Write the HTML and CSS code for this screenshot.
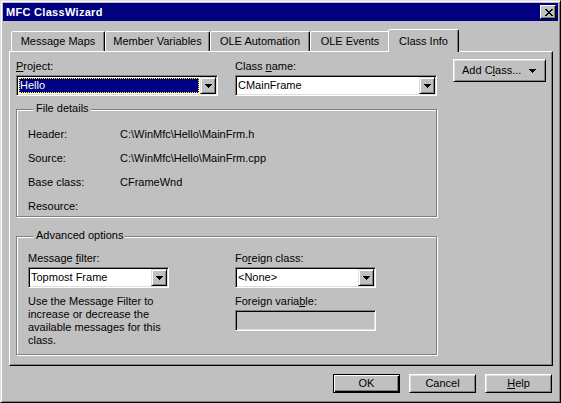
FILE: index.html
```html
<!DOCTYPE html>
<html>
<head>
<meta charset="utf-8">
<title>MFC ClassWizard</title>
<link rel="stylesheet" href="styles.css">
</head>
<body>
<div class="window">
  <div class="titlebar">
    <span class="title">MFC ClassWizard</span>
    <div class="close"><svg width="8" height="7" viewBox="0 0 8 7"><path d="M0 0h2v1h-2zM6 0h2v1h-2zM1 1h2v1h-2zM5 1h2v1h-2zM2 2h4v1h-4zM3 3h2v1h-2zM2 4h4v1h-4zM1 5h2v1h-2zM5 5h2v1h-2zM0 6h2v1h-2zM6 6h2v1h-2z"/></svg></div>
  </div>
  <div class="client">
    <div class="tabs">
      <div class="tab t-mm">Message Maps</div>
      <div class="tab t-mv">Member Variables</div>
      <div class="tab t-oa">OLE Automation</div>
      <div class="tab t-oe">OLE Events</div>
      <div class="tab t-ci selected">Class Info</div>
    </div>
    <div class="panel">
      <div class="main">
        <div class="fields">
          <div class="field">
            <div class="label"><u>P</u>roject:</div>
            <div class="combo">
              <div class="val sel"><span>Hello</span></div>
              <div class="drop"><svg width="7" height="4" viewBox="0 0 7 4"><path d="M0 0h7v1h-1v1h-1v1h-1v1h-1v-1h-1v-1h-1v-1h-1z"/></svg></div>
            </div>
          </div>
          <div class="field">
            <div class="label">Class <u>n</u>ame:</div>
            <div class="combo">
              <div class="val">CMainFrame</div>
              <div class="drop"><svg width="7" height="4" viewBox="0 0 7 4"><path d="M0 0h7v1h-1v1h-1v1h-1v1h-1v-1h-1v-1h-1v-1h-1z"/></svg></div>
            </div>
          </div>
        </div>

        <div class="group file-group">
          <div class="group-title">File details</div>
          <div class="details">
            <span>Header:</span><span>C:\WinMfc\Hello\MainFrm.h</span>
            <span>Source:</span><span>C:\WinMfc\Hello\MainFrm.cpp</span>
            <span>Base class:</span><span>CFrameWnd</span>
            <span>Resource:</span><span></span>
          </div>
        </div>

        <div class="group adv-group">
          <div class="group-title">Advanced options</div>
          <div class="adv">
            <div class="col">
              <div class="label">Message <u>f</u>ilter:</div>
              <div class="combo small">
                <div class="val">Topmost Frame</div>
                <div class="drop"><svg width="7" height="4" viewBox="0 0 7 4"><path d="M0 0h7v1h-1v1h-1v1h-1v1h-1v-1h-1v-1h-1v-1h-1z"/></svg></div>
              </div>
              <p class="desc">Use the Message Filter to<br>increase or decrease the<br>available messages for this<br>class.</p>
            </div>
            <div class="col">
              <div class="label">Fo<u>r</u>eign class:</div>
              <div class="combo small">
                <div class="val">&lt;None&gt;</div>
                <div class="drop"><svg width="7" height="4" viewBox="0 0 7 4"><path d="M0 0h7v1h-1v1h-1v1h-1v1h-1v-1h-1v-1h-1v-1h-1z"/></svg></div>
              </div>
              <div class="label second">Foreign varia<u>b</u>le:</div>
              <div class="edit disabled"></div>
            </div>
          </div>
        </div>
      </div>
      <div class="btn addclass">
        <span>Add C<u>l</u>ass...</span>
        <svg width="7" height="4" viewBox="0 0 7 4"><path d="M0 0h7v1h-1v1h-1v1h-1v1h-1v-1h-1v-1h-1v-1h-1z"/></svg>
      </div>
    </div>
    <div class="buttons">
      <div class="btn default">OK</div>
      <div class="btn">Cancel</div>
      <div class="btn"><u>H</u>elp</div>
    </div>
  </div>
</div>
</body>
</html>
```

FILE: styles.css
```css
* { box-sizing: border-box; }
html, body {
  margin: 0;
  padding: 0;
  background: #c0c0c0;
}
body {
  font-family: "Liberation Sans", Arial, sans-serif;
  font-size: 11px;
  line-height: 13px;
  color: #000;
}
u { text-decoration: underline; text-underline-offset: 1px; }
svg { display: block; }

.window {
  width: 561px;
  height: 403px;
  background: #c0c0c0;
  border: 1px solid;
  border-color: #dfdfdf #000 #000 #dfdfdf;
  box-shadow: inset 1px 1px #fff, inset -1px -1px #808080;
  padding: 2px;
}

.titlebar {
  height: 18px;
  background: #000080;
  display: flex;
  align-items: center;
  justify-content: space-between;
  padding: 0 2px 0 3px;
}
.title {
  color: #fff;
  font-weight: bold;
  letter-spacing: 0.3px;
}
.close {
  width: 16px;
  height: 14px;
  background: #c0c0c0;
  border: 1px solid;
  border-color: #fff #000 #000 #fff;
  box-shadow: inset -1px -1px #808080;
  display: flex;
  align-items: center;
  justify-content: center;
  padding-left: 1px;
}

.client {
  padding: 8px 5px 0 6px;
}

.tabs {
  display: flex;
  align-items: flex-end;
  height: 22px;
  padding-left: 2px;
  position: relative;
  z-index: 1;
}
.tab {
  height: 20px;
  border: 1px solid;
  border-bottom: 0;
  border-color: #fff #000 transparent #fff;
  border-radius: 2px 2px 0 0;
  box-shadow: inset -1px 0 #808080;
  background: #c0c0c0;
  text-align: center;
  padding-top: 3px;
  white-space: nowrap;
}
.t-mm { width: 94px; }
.t-mv { width: 105px; }
.t-oa { width: 100px; }
.t-oe { width: 80px; }
.t-ci { width: 67px; }
.tab.selected {
  width: 71px;
  height: 23px;
  margin: 0 -2px -1px -2px;
  padding-top: 5px;
}

.panel {
  width: 544px;
  height: 315px;
  border: 1px solid;
  border-color: #fff #000 #000 #fff;
  box-shadow: inset -1px -1px #808080;
  display: flex;
  align-items: flex-start;
  padding: 7px 0 0 6px;
}
.main {
  width: 422px;
  padding-top: 1px;
}
.fields {
  display: flex;
  gap: 17px;
}
.field { width: 202px; }
.label { height: 13px; margin-bottom: 2px; white-space: nowrap; }

.combo {
  display: flex;
  height: 21px;
  background: #fff;
  border: 1px solid;
  border-color: #808080 #fff #fff #808080;
  box-shadow: inset 1px 1px #000, inset -1px -1px #dfdfdf;
  padding: 1px;
}
.combo.small { width: 141px; }
.val {
  flex: 1;
  padding-left: 1px;
  line-height: 17px;
  white-space: nowrap;
  overflow: hidden;
}
.val.sel {
  margin: 1px 1px 1px 1px;
  padding: 0;
  background: #000080;
  color: #fff;
  border: 1px dotted #ffff00;
  line-height: 13px;
}
.drop {
  width: 16px;
  height: 17px;
  background: #c0c0c0;
  border: 1px solid;
  border-color: #dfdfdf #000 #000 #dfdfdf;
  box-shadow: inset 1px 1px #fff, inset -1px -1px #808080;
  display: flex;
  align-items: center;
  justify-content: center;
  padding-top: 1px;
}

.edit {
  width: 141px;
  height: 21px;
  border: 1px solid;
  border-color: #808080 #fff #fff #808080;
  box-shadow: inset 1px 1px #000, inset -1px -1px #dfdfdf;
  background: #fff;
}
.edit.disabled { background: #c0c0c0; }

.group {
  width: 421px;
  border: 1px solid #808080;
  box-shadow: 1px 1px 0 #fff, inset 1px 1px 0 #fff;
}
.group-title {
  display: table;
  margin: -8px 0 0 5px;
  padding: 0 2px 0 3px;
  background: #c0c0c0;
}
.file-group {
  margin-top: 13px;
  padding: 0 0 3px 11px;
}
.details {
  display: grid;
  grid-template-columns: 92px auto;
  row-gap: 11px;
  margin-top: 13px;
}
.adv-group {
  margin-top: 19px;
  padding: 0 0 7px 11px;
}
.adv {
  display: grid;
  grid-template-columns: 207px 141px;
  margin-top: 10px;
}
.desc {
  margin: 7px 0 0;
  white-space: nowrap;
}
.label.second { margin-top: 7px; }

.btn {
  height: 19px;
  width: 67px;
  background: #c0c0c0;
  border: 1px solid;
  border-color: #fff #000 #000 #fff;
  box-shadow: inset 1px 1px #dfdfdf, inset -1px -1px #808080;
  text-align: center;
  line-height: 17px;
}
.btn.default {
  border: 1px solid #000;
  box-shadow: inset 1px 1px #fff, inset -1px -1px #000, inset -2px -2px #808080;
}
.addclass {
  width: 93px;
  height: 23px;
  margin-left: 15px;
  display: flex;
  align-items: center;
  padding: 0 9px 0 8px;
  text-align: left;
}
.addclass svg { margin-left: auto; }

.buttons {
  display: flex;
  justify-content: flex-end;
  gap: 9px;
  margin-top: 8px;
  padding-right: 1px;
}
```
